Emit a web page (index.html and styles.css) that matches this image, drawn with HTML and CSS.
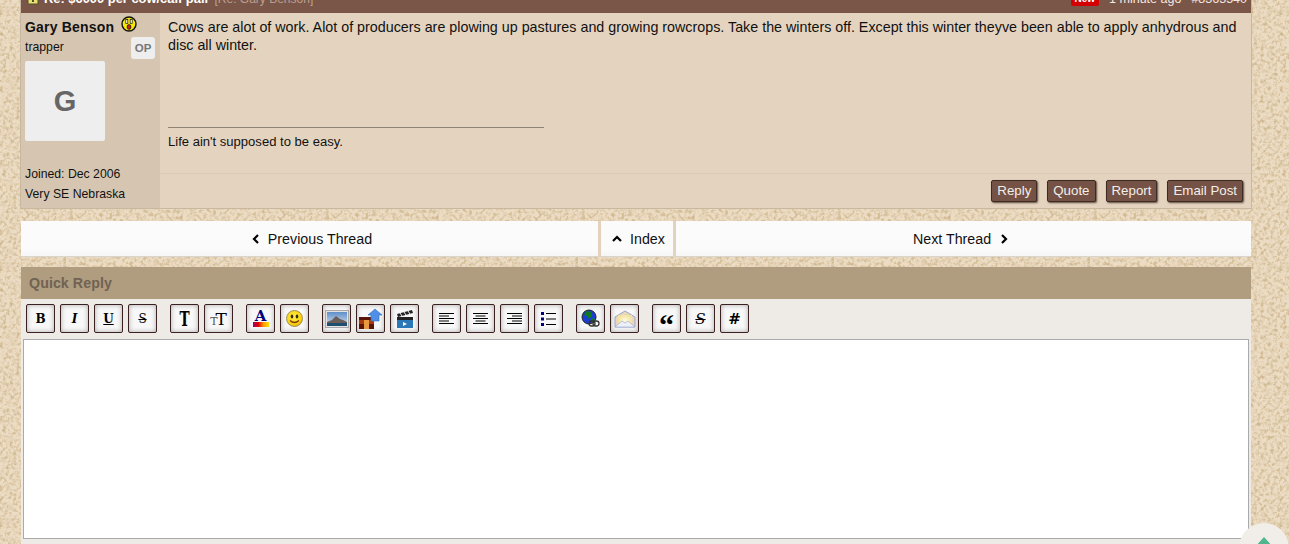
FILE: index.html
```html
<!DOCTYPE html>
<html lang="en">
<head>
<meta charset="utf-8">
<title>Re: $6000 per cow/calf pair</title>
<link rel="stylesheet" href="styles.css">
</head>
<body>
<div class="page">
  <article class="post">
    <header class="post-head">
      <svg class="head-icon" width="12" height="12" viewBox="0 0 12 12"><path d="M1 5h10v6H1z" fill="#e8e070" stroke="#555028"/><path d="M3 1h6l1 4H2z" fill="#d9d060" stroke="#555028"/><path d="M5 7h2v2H5z" fill="#555028"/></svg>
      <span class="post-title">Re: $6000 per cow/calf pair</span>
      <span class="post-re">[Re: Gary Benson]</span>
      <span class="head-right">
        <span class="new-badge">New</span>
        <span>1 minute ago</span>
        <span>#8363540</span>
      </span>
    </header>
    <div class="post-body">
      <aside class="author">
        <div class="author-name">
          <b>Gary Benson</b>
          <svg class="mood" width="16" height="16" viewBox="0 0 16 16"><circle cx="8" cy="8" r="7" fill="#f6e800" stroke="#111" stroke-width="1.4"/><rect x="4.800" y="3.600" width="2" height="4" fill="#fff" stroke="#111" stroke-width=".7"/><rect x="9.200" y="3.600" width="2" height="4" fill="#fff" stroke="#111" stroke-width=".7"/><ellipse cx="8" cy="11" rx="1.900" ry="2.400" fill="#c21" stroke="#111" stroke-width=".8"/></svg>
        </div>
        <div class="author-rank">
          <span>trapper</span>
          <span class="op">OP</span>
        </div>
        <div class="avatar">G</div>
        <div class="author-meta">
          <div>Joined: Dec 2006</div>
          <div>Very SE Nebraska</div>
        </div>
      </aside>
      <div class="post-main">
        <div class="post-content">
          <p class="post-text">Cows are alot of work. Alot of producers are plowing up pastures and growing rowcrops. Take the winters off. Except this winter theyve been able to apply anhydrous and disc all winter.</p>
          <div class="signature">Life ain't supposed to be easy.</div>
        </div>
        <div class="post-actions">
          <a class="action">Reply</a>
          <a class="action">Quote</a>
          <a class="action">Report</a>
          <a class="action">Email Post</a>
        </div>
      </div>
    </div>
  </article>

  <nav class="thread-nav">
    <a class="nav-cell nav-prev"><svg class="chev" width="8" height="10" viewBox="0 0 8 10"><path d="M6 1 2 5l4 4" fill="none" stroke="#000" stroke-width="2.2"/></svg>Previous Thread</a>
    <a class="nav-cell nav-index"><svg class="chev" width="10" height="8" viewBox="0 0 10 8"><path d="M1 6l4-4 4 4" fill="none" stroke="#000" stroke-width="2.2"/></svg>Index</a>
    <a class="nav-cell nav-next">Next Thread<svg class="chev chev-r" width="8" height="10" viewBox="0 0 8 10"><path d="M2 1l4 4-4 4" fill="none" stroke="#000" stroke-width="2.2"/></svg></a>
  </nav>

  <section class="reply">
    <h2 class="reply-head">Quick Reply</h2>
    <div class="toolbar">
      <div class="tool-group">
        <span class="tool t-b">B</span>
        <span class="tool t-i">I</span>
        <span class="tool t-u">U</span>
        <span class="tool t-s">S</span>
      </div>
      <div class="tool-group">
        <span class="tool t-big"><span class="narrow">T</span></span>
        <span class="tool t-size"><small>T</small>T</span>
      </div>
      <div class="tool-group">
        <span class="tool t-color">A<i class="rainbow"></i></span>
        <span class="tool"><svg width="19" height="19" viewBox="0 0 19 19"><defs><radialGradient id="sm" cx=".45" cy=".4" r=".7"><stop offset="0" stop-color="#fff04a"/><stop offset=".65" stop-color="#fbd40c"/><stop offset="1" stop-color="#d89a10"/></radialGradient></defs><circle cx="9.500" cy="9.500" r="8" fill="url(#sm)" stroke="#a09060"/><ellipse cx="7" cy="7.500" rx="1.300" ry="2" fill="#3a2a10"/><ellipse cx="12" cy="7.500" rx="1.300" ry="2" fill="#3a2a10"/><path d="M5 11.500q4.500 4 9 0" fill="none" stroke="#7a3b10" stroke-width="1.200"/></svg></span>
      </div>
      <div class="tool-group">
        <span class="tool"><svg width="24" height="18" viewBox="0 0 24 18"><defs><linearGradient id="sky" x1="0" y1="0" x2="0" y2="1"><stop offset="0" stop-color="#5f8fc8"/><stop offset="1" stop-color="#d8e4f0"/></linearGradient></defs><rect x=".5" y=".5" width="23" height="17" fill="#e4e4e4" stroke="#a8a8a8"/><rect x="2" y="2" width="20" height="14" fill="url(#sky)"/><path d="M2 12l5-2 4-4 4 3 3 1 4 2v4H2z" fill="#6a5f58"/><path d="M2 13h20v3H2z" fill="#1f4f70"/></svg></span>
        <span class="tool"><svg width="25" height="22" viewBox="0 0 25 22"><path d="M1 9h15v12H1z" fill="#a83a10"/><path d="M1 9h15v3H1zM1 16h15v5H1z" fill="#5a1408"/><path d="M6 12h5v9H6z" fill="#e89a40"/><path d="M17 1l7 6h-3v6h-8V7h-3z" fill="#4f8fe8" stroke="#2f6fc8" stroke-width=".6"/></svg></span>
        <span class="tool"><svg width="20" height="20" viewBox="0 0 20 20"><path d="M2 5 17 1l1 3L3 8z" fill="#222"/><path d="M5 4l2 3M9 3l2 3M13 2l2 3" stroke="#eee" stroke-width="1"/><rect x="2" y="8" width="16" height="3" fill="#222"/><rect x="2" y="11" width="16" height="8" fill="#2a78b8"/><path d="M8 13l4 2-4 2z" fill="#fff"/></svg></span>
      </div>
      <div class="tool-group">
        <span class="tool"><svg width="15" height="12" viewBox="0 0 15 12"><path d="M0 .5h15M0 3h10M0 5.500h15M0 8h10M0 10.500h15" stroke="#000"/></svg></span>
        <span class="tool"><svg width="15" height="12" viewBox="0 0 15 12"><path d="M0 .5h15M2.500 3h10M0 5.500h15M2.500 8h10M0 10.500h15" stroke="#000"/></svg></span>
        <span class="tool"><svg width="15" height="12" viewBox="0 0 15 12"><path d="M0 .5h15M5 3h10M0 5.500h15M5 8h10M0 10.500h15" stroke="#000"/></svg></span>
        <span class="tool"><svg width="15" height="14" viewBox="0 0 15 14"><path d="M0 0h3v3H0zM0 5.500h3v3H0zM0 11h3v3H0z" fill="#00007a"/><path d="M5 1.500h10M5 7h10M5 12.500h10" stroke="#000"/></svg></span>
      </div>
      <div class="tool-group">
        <span class="tool"><svg width="20" height="20" viewBox="0 0 20 20"><circle cx="8" cy="8" r="7" fill="#1b3fd0" stroke="#222"/><path d="M5 2l5 1 1 4-3 3-2-3-3-1zM10 10l3-1 1 2-3 3z" fill="#0f7a20"/><g fill="none" stroke="#333" stroke-width="1.300"><rect x="8" y="12" width="6" height="5" rx="2.500"/><rect x="12" y="12" width="6" height="5" rx="2.500"/></g></svg></span>
        <span class="tool"><svg width="22" height="18" viewBox="0 0 22 18"><defs><radialGradient id="env"><stop offset="0" stop-color="#fffbe0"/><stop offset="1" stop-color="#f2e2a0"/></radialGradient></defs><path d="M1 7 11 1l10 6v10H1z" fill="#e6d8b8" stroke="#9aa4cc"/><path d="M4 5h14v8l-7 3-7-3z" fill="url(#env)"/><path d="M1 17l7-6 3 2 3-2 7 6z" fill="#eef0f8" stroke="#a4aed4" stroke-width=".7"/></svg></span>
      </div>
      <div class="tool-group">
        <span class="tool t-quote">&ldquo;</span>
        <span class="tool t-spoil">S</span>
        <span class="tool t-hash">#</span>
      </div>
    </div>
    <div class="editor-wrap">
      <textarea class="editor" aria-label="Quick Reply"></textarea>
    </div>
  </section>
</div>
<a class="to-top"><svg width="20" height="10" viewBox="0 0 20 10"><path d="M10 0l9 10H1z" fill="#4fb58d"/></svg></a>
</body>
</html>
```
FILE: styles.css
```css
* { box-sizing: border-box; }
html, body { margin: 0; height: 544px; overflow: hidden; }
body {
  font-family: "Liberation Sans", Arial, sans-serif;
  color: #111;
  background-color: #ecdcc4;
  background-image: url("data:image/svg+xml,%3Csvg xmlns='http://www.w3.org/2000/svg' width='256' height='256'%3E%3Cfilter id='n'%3E%3CfeTurbulence type='fractalNoise' baseFrequency='.3' numOctaves='3' stitchTiles='stitch'/%3E%3CfeColorMatrix values='0 0 0 0 .62 0 0 0 0 .47 0 0 0 0 .27 1.800 1.800 0 0 -1.600'/%3E%3C/filter%3E%3Crect width='256' height='256' filter='url(%23n)'/%3E%3C/svg%3E");
}
.page { margin: -14px 37px 0 20px; }

.post { border: 1px solid #c9b8a0; border-top: 0; }
.post-head {
  display: flex; align-items: center; height: 27px; padding: 0 4px 2px 6px;
  background: #7a5648; color: #fff; font-size: 12.900px;
}
.head-icon { margin-right: 5px; }
.post-title { font-weight: bold; }
.post-re { margin-left: 5px; color: #b9a092; font-size: 12px; }
.head-right { margin-left: auto; display: flex; align-items: center; gap: 10px; font-size: 12.500px; color: #f2e9e2; }
.new-badge { background: #d40000; color: #fff; font-size: 10px; font-weight: bold; padding: 0 4px; border-radius: 2px; line-height: 14px; }

.post-body { display: flex; height: 195px; }
.author { width: 139px; flex: none; background: #d6c6b1; padding: 5px 5px 4px 4px; display: flex; flex-direction: column; font-size: 12.250px; }
.author-name { display: flex; gap: 7px; align-items: flex-start; height: 20px; font-size: 14px; letter-spacing: .2px; }
.author-name b { margin-top: 1px; }
.mood { margin-top: -2px; }
.author-rank { display: flex; justify-content: space-between; height: 22px; margin-top: -1px; line-height: 20px; }
.op { background: #eee; color: #777; font-weight: bold; font-size: 11.500px; width: 24px; height: 22px; line-height: 22px; text-align: center; border-radius: 3px; }
.avatar { width: 80px; height: 80px; margin-top: 2px; background: #eee; color: #666; font-size: 29px; font-weight: bold; display: flex; align-items: center; justify-content: center; border-radius: 2px; }
.author-meta { margin-top: auto; line-height: 20px; }

.post-main { flex: 1; min-width: 0; background: #e4d4bf; display: flex; flex-direction: column; }
.post-content { height: 161px; padding: 5px 8px 0; border-bottom: 1px solid #dccbb6; font-size: 14.300px; line-height: 18px; }
.post-text { margin: 0; height: 109px; }
.signature { width: 376px; border-top: 1px solid #8f8374; padding-top: 5px; font-size: 13.050px; line-height: 17px; }
.post-actions { flex: 1; display: flex; justify-content: flex-end; align-items: flex-start; gap: 10px; padding: 6px 8px 0 0; }
.action { height: 22px; padding: 0 5px; background: #755246; color: #f4eee8; border: 1px solid #3d2a22; border-radius: 2px; box-shadow: 1px 1px 2px #5d4a3c; font-size: 13.300px; line-height: 20px; }

.thread-nav { display: grid; grid-template-columns: 577px 72px 1fr; gap: 3px; margin: 12px 1px 10px; height: 36px; background: #e3d3bc; }
.nav-cell { display: flex; align-items: center; justify-content: center; background: linear-gradient(#fbfbfb 80%, #f6f6f6); border-bottom: 1px solid #d9d5cd; font-size: 14.250px; }
.nav-prev { padding-left: 5px; }
.nav-index { padding-left: 3px; }
.nav-next { padding-right: 6px; }
.chev { margin-right: 8px; }
.chev-r { margin: 0 0 0 9px; }

.reply { margin: 0 1px; }
.reply-head { margin: 0; height: 32px; padding: 0 8px; background: #b09c7e; color: #6f6354; font-size: 14.250px; line-height: 32px; letter-spacing: .05px; }
.toolbar { display: flex; gap: 13px; height: 40px; padding: 5px 5px 0; background: #eeeae6; }
.tool-group { display: flex; gap: 5px; }
.tool {
  width: 29px; height: 29px; flex: none; display: flex; align-items: center; justify-content: center;
  background: #f8f8f8; border: 1px solid #3a2020; border-radius: 2px; box-shadow: inset 0 0 5px #aaa;
  font-family: "DejaVu Serif", "Liberation Serif", serif; font-size: 12px; font-weight: bold; color: #000;
}
.t-i { font-style: italic; }
.t-u { text-decoration: underline; }
.t-s { text-decoration: line-through; font-weight: normal; }
.t-big { font-size: 20px; }
.narrow { display: inline-block; transform: scaleX(.68); }
.t-size { font-size: 17px; font-weight: normal; }
.t-size small { font-size: 11px; color: #555; align-self: flex-end; margin: 0 -2px 4px 0; }
.t-color { font-size: 15px; color: #00007a; flex-direction: column; line-height: 12px; }
.rainbow { display: block; width: 16px; height: 5px; background: linear-gradient(90deg, #a00070, #e00000, #ffa000, #ffe000); }
.t-quote { font-family: "Liberation Serif", serif; font-size: 30px; line-height: 30px; align-items: flex-start; padding-top: 5px; }
.t-spoil { font-style: italic; font-weight: normal; font-size: 15px; text-decoration: line-through; }
.t-hash { font-size: 15px; }

.editor-wrap { padding: 0 2px 5px; background: #eeeae6; height: 205px; }
.editor { display: block; width: 100%; height: 200px; margin: 0; padding: 0; background: #fff; border: 1px solid #aaa; border-radius: 0; resize: none; outline: 0; }

.to-top { position: fixed; left: 1239px; top: 523px; width: 50px; height: 50px; border-radius: 50%; background: #f1ede8; display: flex; justify-content: center; padding-top: 14px; }
```
